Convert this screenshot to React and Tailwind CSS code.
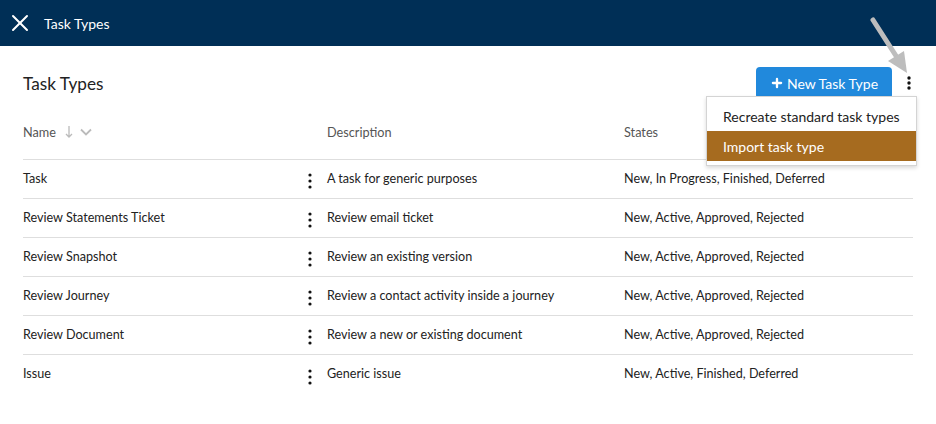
import { X, Plus } from "lucide-react";

const rows = [
    { name: "Task", desc: "A task for generic purposes", states: "New, In Progress, Finished, Deferred" },
    { name: "Review Statements Ticket", desc: "Review email ticket", states: "New, Active, Approved, Rejected" },
    { name: "Review Snapshot", desc: "Review an existing version", states: "New, Active, Approved, Rejected" },
    { name: "Review Journey", desc: "Review a contact activity inside a journey", states: "New, Active, Approved, Rejected" },
    { name: "Review Document", desc: "Review a new or existing document", states: "New, Active, Approved, Rejected" },
    { name: "Issue", desc: "Generic issue", states: "New, Active, Finished, Deferred" },
];

const Kebab = ({ className = "" }) => (
    <svg width="4" height="16" viewBox="0 0 4 16" className={className}>
        <circle cx="2" cy="2" r="1.6" fill="#111" />
        <circle cx="2" cy="8" r="1.6" fill="#111" />
        <circle cx="2" cy="14" r="1.6" fill="#111" />
    </svg>
);

const App = () => {
    return (
        <div className="relative w-[936px] h-[424px] bg-white overflow-hidden font-['Lato',sans-serif] text-[#222]">
            {/* Top bar */}
            <div className="h-[46px] bg-[#002f56] flex items-center pl-[6px] text-white">
                <X size={28} strokeWidth={1.7} />
                <span className="ml-[10px] text-[14px]">Task Types</span>
            </div>

            <div className="px-[23px]">
                {/* Title row */}
                <div className="mt-[21px] h-[32px] flex items-center justify-between">
                    <h1 className="text-[17.2px] pt-[2px]">Task Types</h1>
                    <div className="flex items-center">
                        <button className="h-[32px] w-[136px] rounded-[4px] bg-[#2189dc] text-white text-[14px] flex items-center justify-center gap-[3px]">
                            <Plus size={14} strokeWidth={4} />
                            New Task Type
                        </button>
                        <svg width="4" height="14" viewBox="0 0 4 14" className="ml-[15px] mr-[2px]">
                            <circle cx="2" cy="2" r="1.7" fill="#111" />
                            <circle cx="2" cy="7" r="1.7" fill="#111" />
                            <circle cx="2" cy="12" r="1.7" fill="#111" />
                        </svg>
                    </div>
                </div>

                {/* Table header */}
                <div className="h-[61px] flex items-end pb-[17px] border-b border-[#dedede] text-[12.7px] text-[#555]">
                    <div className="w-[304px] flex items-center">
                        Name
                        <svg width="10" height="14" viewBox="0 0 10 14" className="ml-[8px]">
                            <path d="M5 1v11M2 9l3 3 3-3" stroke="#bbb" strokeWidth="1.3" fill="none" />
                        </svg>
                        <svg width="12" height="8" viewBox="0 0 12 8" className="ml-[6px]">
                            <path d="M1 1.5l5 5 5-5" stroke="#bbb" strokeWidth="1.8" fill="none" />
                        </svg>
                    </div>
                    <div className="w-[297px]">Description</div>
                    <div>States</div>
                </div>

                {/* Rows */}
                {rows.map((r, i) => (
                    <div
                        key={r.name}
                        className={`h-[39px] flex items-center text-[12.6px] ${i < rows.length - 1 ? "border-b border-[#dedede]" : ""}`}
                    >
                        <div className="w-[285px]">{r.name}</div>
                        <div className="w-[19px] pt-[4px]">
                            <Kebab />
                        </div>
                        <div className="w-[297px]">{r.desc}</div>
                        <div>{r.states}</div>
                    </div>
                ))}
            </div>

            {/* Dropdown menu */}
            <div className="absolute left-[706px] top-[96px] w-[211px] bg-white border border-[#d4d4d4] shadow-[0_2px_4px_rgba(0,0,0,0.15)] pt-[4px] pb-[4px] text-[14px]">
                <div className="h-[30px] flex items-center px-[16px]">Recreate standard task types</div>
                <div className="h-[30px] flex items-center px-[16px] bg-[#a66b1f] text-white">Import task type</div>
            </div>

            {/* Annotation arrow */}
            <svg className="absolute left-0 top-0 pointer-events-none" width="936" height="424">
                <line x1="873" y1="20" x2="898" y2="59" stroke="#bdbdbd" strokeWidth="5" strokeLinecap="round" />
                <polygon points="907,73 888,61 904,51" fill="#bdbdbd" />
            </svg>
        </div>
    );
};

export default App;
